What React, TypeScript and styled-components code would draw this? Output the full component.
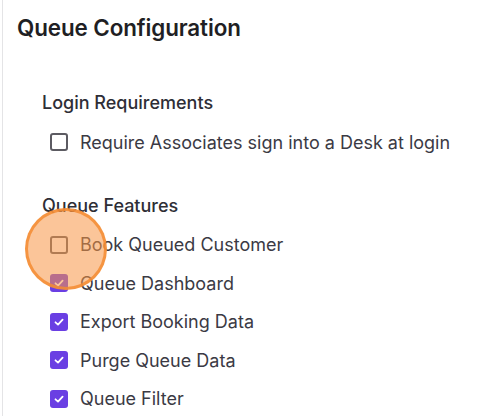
import styled, { createGlobalStyle } from 'styled-components'

const GlobalStyle = createGlobalStyle`
  body {
    margin: 0;
    background: #ffffff;
    font-family: Inter, "Noto Sans", "Liberation Sans", sans-serif;
  }
`

const Panel = styled.div`
  position: relative;
  margin-left: 2px;
  min-height: 416px;
  box-sizing: border-box;
  border-left: 1px solid #e4e4e6;
  padding: 15px 0 0 14px;
  overflow: hidden;
`

const Title = styled.h1`
  margin: 0;
  font-size: 22.4px;
  line-height: 26px;
  font-weight: 600;
  color: #1f1f24;
  letter-spacing: -0.1px;
`

const Section = styled.section<{ top: number }>`
  margin: ${(props) => props.top}px 0 0 25px;
  display: flex;
  flex-direction: column;
`

const SectionTitle = styled.h2`
  margin: 0 0 9px;
  font-size: 18px;
  line-height: 22px;
  font-weight: 500;
  color: #2e2e36;
`

const Row = styled.label`
  display: flex;
  align-items: center;
  gap: 12px;
  height: 38.5px;
  padding-left: 8px;
  font-size: 18px;
  color: #3b3a44;
  cursor: pointer;
`

const Box = styled.span<{ checked: boolean }>`
  width: 18px;
  height: 18px;
  box-sizing: border-box;
  border-radius: 3px;
  display: flex;
  align-items: center;
  justify-content: center;
  flex-shrink: 0;
  background: ${(props) => (props.checked ? '#6a3fe3' : '#ffffff')};
  border: ${(props) => (props.checked ? 'none' : '2px solid #5c5b62')};
`

const Highlight = styled.div`
  position: absolute;
  left: 22px;
  top: 208px;
  width: 82px;
  height: 82px;
  box-sizing: border-box;
  border-radius: 50%;
  background: rgba(247, 150, 70, 0.55);
  border: 3px solid rgba(245, 140, 50, 0.85);
  pointer-events: none;
`

function Checkbox({ checked }: { checked: boolean }) {
  return (
    <Box checked={checked}>
      {checked && (
        <svg width="12" height="12" viewBox="0 0 12 12" fill="none">
          <polyline
            points="2.5,6.3 5,8.6 9.6,3.6"
            stroke="#ffffff"
            strokeWidth="1.8"
            strokeLinecap="round"
            strokeLinejoin="round"
          />
        </svg>
      )}
    </Box>
  )
}

const features = [
  { label: 'Book Queued Customer', checked: false },
  { label: 'Queue Dashboard', checked: true },
  { label: 'Export Booking Data', checked: true },
  { label: 'Purge Queue Data', checked: true },
  { label: 'Queue Filter', checked: true },
]

export default function App() {
  return (
    <>
      <GlobalStyle />
      <Panel>
        <Title>Queue Configuration</Title>
        <Section top={51}>
          <SectionTitle>Login Requirements</SectionTitle>
          <Row>
            <Checkbox checked={false} />
            Require Associates sign into a Desk at login
          </Row>
        </Section>
        <Section top={33}>
          <SectionTitle>Queue Features</SectionTitle>
          {features.map((item) => (
            <Row key={item.label}>
              <Checkbox checked={item.checked} />
              {item.label}
            </Row>
          ))}
        </Section>
        <Highlight />
      </Panel>
    </>
  )
}
